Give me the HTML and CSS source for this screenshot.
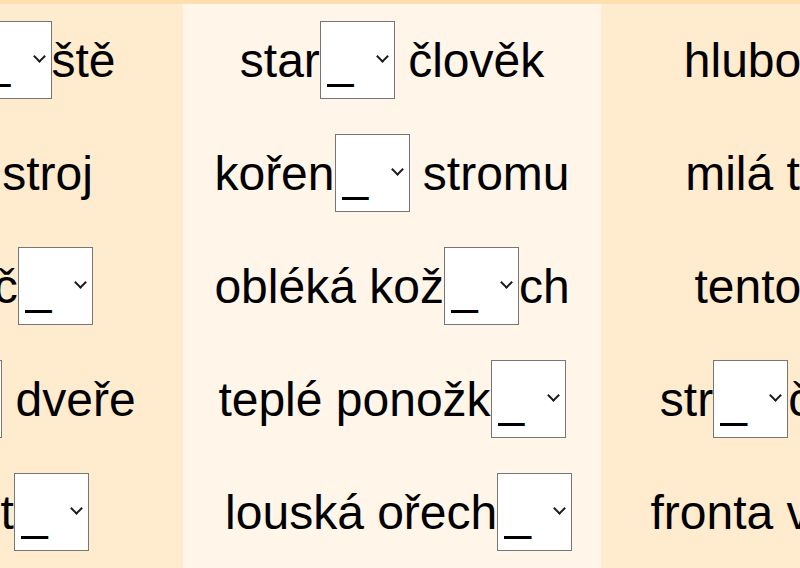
FILE: index.html
```html
<!DOCTYPE html>
<html lang="cs">
<head>
    <meta charset="UTF-8">
    <meta name="viewport" content="width=device-width, initial-scale=1.0">
    <title>Doplň i/y</title>
    <link rel="stylesheet" href="styles.css">
</head>
<body>
    <div class="sheet">
        <div class="column">
            <div class="item">parkov<span class="blank"><select><option>_</option><option>i</option><option>í</option><option>y</option><option>ý</option></select></span>ště</div>
            <div class="item">šic<span class="blank"><select><option>_</option><option>i</option><option>í</option><option>y</option><option>ý</option></select></span> stroj</div>
            <div class="item">dva klíč<span class="blank"><select><option>_</option><option>i</option><option>í</option><option>y</option><option>ý</option><option>e</option></select></span></div>
            <div class="item">zelen<span class="blank"><select><option>_</option><option>i</option><option>í</option><option>y</option><option>ý</option><option>é</option></select></span> dveře</div>
            <div class="item">do kost<span class="blank"><select><option>_</option><option>i</option><option>í</option><option>y</option><option>ý</option></select></span></div>
        </div>
        <div class="column light">
            <div class="item">star<span class="blank"><select><option>_</option><option>i</option><option>í</option><option>y</option><option>ý</option></select></span> člověk</div>
            <div class="item">kořen<span class="blank"><select><option>_</option><option>i</option><option>í</option><option>y</option><option>ý</option></select></span> stromu</div>
            <div class="item">obléká kož<span class="blank"><select><option>_</option><option>i</option><option>í</option><option>y</option><option>ý</option></select></span>ch</div>
            <div class="item">teplé ponožk<span class="blank"><select><option>_</option><option>i</option><option>í</option><option>y</option><option>ý</option></select></span></div>
            <div class="item">&nbsp;louská ořech<span class="blank"><select><option>_</option><option>i</option><option>í</option><option>y</option><option>ý</option></select></span></div>
        </div>
        <div class="column">
            <div class="item">hlubok<span class="blank"><select><option>_</option><option>i</option><option>í</option><option>y</option><option>ý</option></select></span>m</div>
            <div class="item">milá tetk<span class="blank"><select><option>_</option><option>i</option><option>í</option><option>y</option><option>ý</option></select></span></div>
            <div class="item">tento s<span class="blank"><select><option>_</option><option>i</option><option>í</option><option>y</option><option>ý</option></select></span>r</div>
            <div class="item">str<span class="blank"><select><option>_</option><option>i</option><option>í</option><option>y</option><option>ý</option></select></span>ček Petr</div>
            <div class="item">fronta voják<span class="blank"><select><option>_</option><option>i</option><option>í</option><option>y</option><option>ý</option></select></span></div>
        </div>
    </div>
</body>
</html>
```

FILE: styles.css
```css
body {
    margin: 0;
    font-family: 'Liberation Sans', Arial, sans-serif;
    background-color: #ffebcd;
    overflow: hidden;
}
.sheet {
    display: grid;
    grid-template-columns: 418px 418px 422px;
    margin-left: -235px;
    border-top: 4px solid #ffdfae;
}
.column {
    background-color: #ffebcd;
}
.column.light {
    background-color: #fff5e8;
}
.item {
    padding: 17px 0 18px;
    text-align: center;
    font-size: 48px;
    color: #000;
    white-space: nowrap;
}
.blank {
    position: relative;
    display: inline-block;
}
.blank select {
    appearance: none;
    font-family: inherit;
    font-size: 48px;
    line-height: normal;
    width: 75px;
    height: 78px;
    padding: 0 0 0 6px;
    background-color: white;
    color: #000;
    border: 1px solid #767676;
    border-radius: 0;
}
/* arrow of the dropdown */
.blank::after {
    content: "";
    position: absolute;
    right: 8px;
    top: 50%;
    width: 7px;
    height: 7px;
    margin-top: -8px;
    border-right: 2px solid #1a1a1a;
    border-bottom: 2px solid #1a1a1a;
    transform: rotate(45deg);
    pointer-events: none;
}
```
